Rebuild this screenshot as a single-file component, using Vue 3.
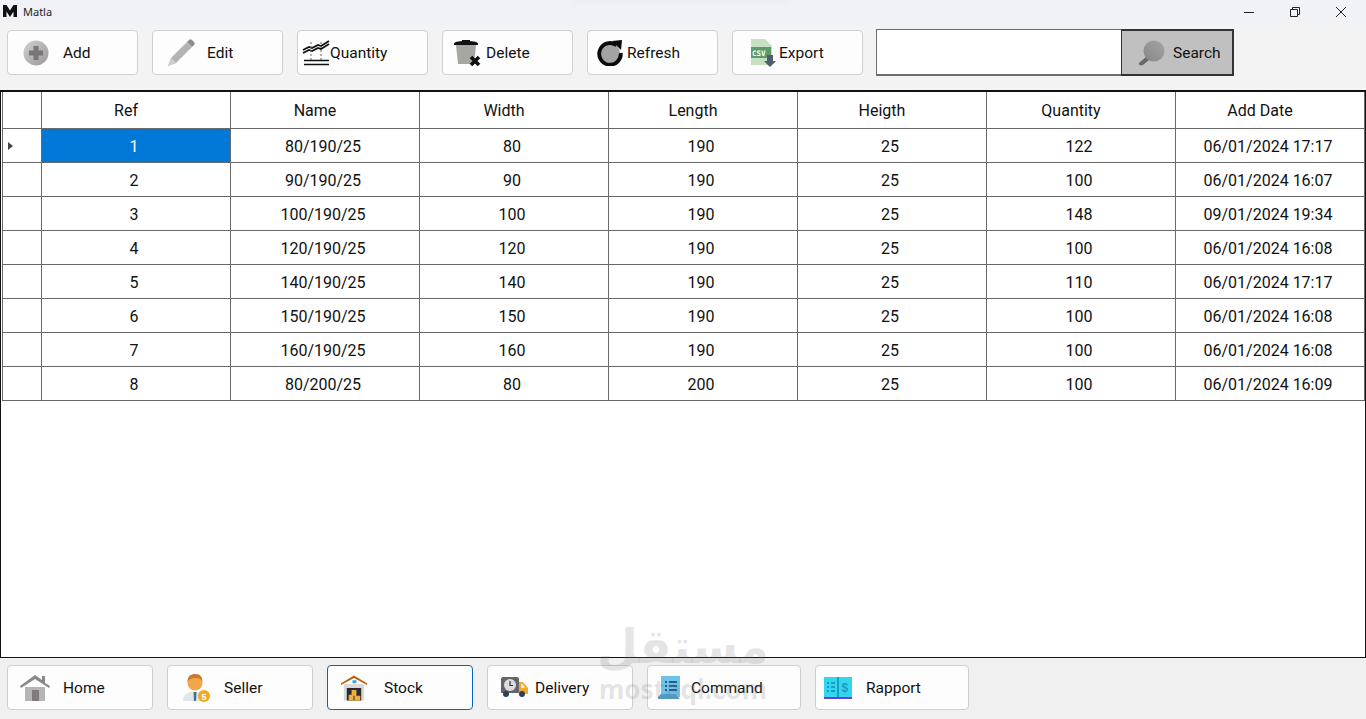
<script setup>
const tools = [
  { label: 'Add', icon: 'add', pad: 15, gap: 14 },
  { label: 'Edit', icon: 'edit', pad: 14, gap: 12 },
  { label: 'Quantity', icon: 'qty', pad: 4, gap: 0 },
  { label: 'Delete', icon: 'del', pad: 11, gap: 5 },
  { label: 'Refresh', icon: 'ref', pad: 9, gap: 4 },
  { label: 'Export', icon: 'exp', pad: 17, gap: 3 },
]
const navs = [
  { label: 'Home', icon: 'home', cls: 'w146', pad: 12, gap: 13 },
  { label: 'Seller', icon: 'seller', cls: 'w146', pad: 15, gap: 14 },
  { label: 'Stock', icon: 'stock', cls: 'w146 active', pad: 13, gap: 17 },
  { label: 'Delivery', icon: 'truck', cls: 'w146', pad: 13, gap: 7 },
  { label: 'Command', icon: 'cmd', cls: 'w154', pad: 10, gap: 11 },
  { label: 'Rapport', icon: 'book', cls: 'w154', pad: 8, gap: 14 },
]
const cols = ['Ref', 'Name', 'Width', 'Length', 'Heigth', 'Quantity', 'Add Date']
const rows = [
  ['1', '80/190/25', '80', '190', '25', '122', '06/01/2024 17:17'],
  ['2', '90/190/25', '90', '190', '25', '100', '06/01/2024 16:07'],
  ['3', '100/190/25', '100', '190', '25', '148', '09/01/2024 19:34'],
  ['4', '120/190/25', '120', '190', '25', '100', '06/01/2024 16:08'],
  ['5', '140/190/25', '140', '190', '25', '110', '06/01/2024 17:17'],
  ['6', '150/190/25', '150', '190', '25', '100', '06/01/2024 16:08'],
  ['7', '160/190/25', '160', '190', '25', '100', '06/01/2024 16:08'],
  ['8', '80/200/25', '80', '200', '25', '100', '06/01/2024 16:09'],
]
</script>

<template>
  <div class="app">
    <header class="titlebar">
      <svg class="logo" width="16" height="14" viewBox="0 0 16 14"><path d="M1 13V1h3.500L8 6.500 11.500 1H15v12h-3.500V7.500L8 13 4.500 7.500V13z" fill="#111"/></svg>
      <span class="title">Matla</span>
      <div class="peek"></div>
      <div class="winctl">
        <svg width="12" height="12" viewBox="0 0 12 12"><path d="M1 6.500h10" stroke="#222" fill="none"/></svg>
        <svg width="12" height="12" viewBox="0 0 12 12"><path d="M1.500 3.500h7v7h-7zM3.500 3.500v-2h7v7h-2" stroke="#222" fill="none"/></svg>
        <svg width="12" height="12" viewBox="0 0 12 12"><path d="M1 1l10 10M11 1L1 11" stroke="#222" fill="none"/></svg>
      </div>
    </header>

    <div class="toolbar">
      <button v-for="t in tools" :key="t.label" class="btn tool" :style="{ paddingLeft: t.pad + 'px', gap: t.gap + 'px' }">
        <svg v-if="t.icon === 'add'" width="26" height="26" viewBox="0 0 26 26">
          <circle cx="13" cy="13" r="12.500" fill="url(#gAdd)"/>
          <path d="M10.500 6h5v4.500H20v5h-4.500V20h-5v-4.500H6v-5h4.500z" fill="#7a7676"/>
          <defs><linearGradient id="gAdd" x1="0" y1="0" x2="1" y2="1"><stop offset="0" stop-color="#d2d2d2"/><stop offset="1" stop-color="#989898"/></linearGradient></defs>
        </svg>
        <svg v-else-if="t.icon === 'edit'" width="28" height="28" viewBox="0 0 28 28">
          <path d="M1 27l3-8L20 3l5 5L9 24z" fill="#b4b4b4"/>
          <path d="M20 3l2-2c1-1 2-1 3 0l2 2c1 1 1 2 0 3l-2 2z" fill="#8d8d8d"/>
          <path d="M1 27l3-8 5 5z" fill="#cfcfcf"/>
        </svg>
        <svg v-else-if="t.icon === 'qty'" width="28" height="26" viewBox="0 0 28 26">
          <path d="M1 10l6-3 3 1 6-3 3 1 8-5" stroke="#111" stroke-width="1.800" fill="none"/>
          <path d="M1 13l6-3 3 1 6-3 3 1 8-5" stroke="#111" stroke-width="1.800" fill="none"/>
          <path d="M9 2v18M19 2v18" stroke="#666" stroke-dasharray="2 2" fill="none"/>
          <path d="M2 20.500h25M2 24.500h25" fill="none" stroke="#111" stroke-width="1.500"/>
        </svg>
        <svg v-else-if="t.icon === 'del'" width="27" height="28" viewBox="0 0 27 28">
          <path d="M2 6h20l-2 19H4z" fill="#a6a6a2"/>
          <path d="M0 5c0-2 3-3 12-3s12 1 12 3v1H0z" fill="#111"/>
          <path d="M8 1h8v2H8z" fill="#111"/>
          <path d="M17 18l8 8M25 18l-8 8" stroke="#111" stroke-width="3.600" fill="none"/>
        </svg>
        <svg v-else-if="t.icon === 'ref'" width="26" height="26" viewBox="0 0 26 26">
          <circle cx="13" cy="13" r="10" fill="#a3a3a3"/>
          <path d="M19.500 5.200A10.800 10.800 0 1 0 23.800 13" stroke="#0a0a0a" stroke-width="3.800" fill="none"/>
          <path d="M15 1l10-1-1 10z" fill="#0a0a0a"/>
        </svg>
        <svg v-else-if="t.icon === 'exp'" width="26" height="28" viewBox="0 0 26 28">
          <path d="M1 0h14l7 7v19H1z" fill="#c5e0c3"/>
          <path d="M1 8h20v11H1z" fill="#5d9b6b"/>
          <text x="2" y="16.500" font-family="DejaVu Sans Mono" font-size="7.500" font-weight="700" fill="#fff">CSV</text>
          <path d="M17 16h6v6h3l-6 6-6-6h3z" fill="#4b5f6d"/>
        </svg>
        <span>{{ t.label }}</span>
      </button>

      <div class="search">
        <div class="search-input"></div>
        <button class="search-btn">
          <svg width="28" height="26" viewBox="0 0 28 26">
            <path d="M2 23l7-6 3 3-6 5c-2 1-5 0-4-2z" fill="#6d6568"/>
            <circle cx="17" cy="11" r="10.500" fill="url(#gS)"/>
            <defs><linearGradient id="gS" x1="0" y1="1" x2="1" y2="0"><stop offset="0" stop-color="#868686"/><stop offset="1" stop-color="#a5a5a5"/></linearGradient></defs>
          </svg>
          <span>Search</span>
        </button>
      </div>
    </div>

    <main class="grid-wrap">
      <div class="row head">
        <div class="cell rh"></div>
        <div v-for="c in cols" :key="c" class="cell hc">{{ c }}</div>
      </div>
      <div v-for="(r, i) in rows" :key="i" class="row">
        <div class="cell rh">
          <span v-if="i === 0" class="arrow"></span>
        </div>
        <div v-for="(v, j) in r" :key="j" class="cell dc" :class="{ sel: i === 0 && j === 0 }">{{ v }}</div>
      </div>
    </main>

    <footer class="bottombar">
      <button v-for="n in navs" :key="n.label" class="btn" :class="n.cls" :style="{ paddingLeft: n.pad + 'px', gap: n.gap + 'px' }">
        <svg v-if="n.icon === 'home'" width="30" height="26" viewBox="0 0 30 26">
          <path d="M5 12h20v14H5z" fill="#b5b5b5"/>
          <path d="M12 15h7v11h-7z" fill="#7f7b7b"/>
          <path d="M0 11L15 0l7 5V1h3v7l5 3-1 2L15 4 1 13z" fill="#8a8888"/>
        </svg>
        <svg v-else-if="n.icon === 'seller'" width="27" height="28" viewBox="0 0 27 28">
          <path d="M0 27c0-7 5-9 10-9h6c3 0 6 2 6 9z" fill="#dfe7e8"/>
          <path d="M10.500 18h3l-.5 9h-2z" fill="#3d6f9e"/>
          <circle cx="12" cy="9" r="7.500" fill="#f0a64a"/>
          <path d="M4.500 8c0-6 3-8 8-8s7 3 7 8c-1-3-3-4-7-4S6 5 4.500 8z" fill="#c9792f"/>
          <circle cx="21" cy="22" r="6" fill="#f1a91e"/>
          <text x="18.500" y="25.500" font-family="Liberation Sans" font-size="9" font-weight="700" fill="#fff">5</text>
        </svg>
        <svg v-else-if="n.icon === 'stock'" width="26" height="26" viewBox="0 0 27 26">
          <path d="M3 9h21v17H3z" fill="#d9d9d9"/>
          <path d="M6 13h15v13H6z" fill="#2c2c30"/>
          <path d="M8 20h5v6H8zM11 15h5v6h-5zM14 21h6v5h-6z" fill="#efb03d"/>
          <path d="M0 8L13.500 0 27 8v2L13.500 2.500 0 10z" fill="#b8640f"/>
          <path d="M12 5h4v3h-4z" fill="#2ba3dd"/>
        </svg>
        <svg v-else-if="n.icon === 'truck'" width="27" height="21" viewBox="0 0 27 21">
          <path d="M2 0h14c1 0 2 1 2 2v14H0V2c0-1 1-2 2-2z" fill="#65636b"/>
          <circle cx="9" cy="8" r="6" fill="#dcdcdc"/>
          <path d="M9 4v4.500h3" stroke="#333" stroke-width="1.200" fill="none"/>
          <path d="M18 5h4l5 6v6h-9z" fill="#f0a82c"/>
          <path d="M20 7h2l2 4h-4z" fill="#cfeaf4"/>
          <circle cx="5" cy="17" r="3" fill="#2e3f55"/>
          <circle cx="21" cy="17" r="3" fill="#2e3f55"/>
        </svg>
        <svg v-else-if="n.icon === 'cmd'" width="22" height="23" viewBox="0 0 22 23">
          <path d="M3 0h19v21H3z" fill="#6cc2e8"/>
          <path d="M7 5h2v2H7zM7 9h2v2H7zM7 13h2v2H7zM11 5h8v2h-8zM11 9h8v2h-8zM11 13h8v2h-8z" fill="#1e5f92"/>
          <path d="M0 21l3-3h14l3 3 2 2H0z" fill="#4f9dc8"/>
        </svg>
        <svg v-else-if="n.icon === 'book'" width="28" height="22" viewBox="0 0 28 22">
          <path d="M0 0h28v20H0z" fill="#32d7ef"/>
          <path d="M13 0h2v20h-2z" fill="#1c9cc4"/>
          <path d="M0 20h28v2H0z" fill="#6a3fe0"/>
          <path d="M3 5h2v2H3zM7 5h4v2H7zM3 9h2v2H3zM7 9h4v2H7zM3 13h2v2H3zM7 13h4v2H7z" fill="#1c9cc4"/>
          <text x="17.500" y="15" font-family="Liberation Sans" font-size="12" font-weight="700" fill="#1c9cc4">$</text>
        </svg>
        <span>{{ n.label }}</span>
      </button>
    </footer>

    <div class="watermark" aria-hidden="true">
      <div class="wm-ar">مستقل</div>
      <div class="wm-en">mostaql.com</div>
    </div>
  </div>
</template>

<style scoped>
.app {
  position: relative;
  width: 1366px;
  height: 719px;
  display: flex;
  flex-direction: column;
  background: #f3f3f3;
  overflow: hidden;
  font-family: Roboto, "Noto Sans", sans-serif;
  font-size: 16px;
  color: #111;
}
.titlebar {
  height: 23px;
  background: #f0f2f7;
  display: flex;
  align-items: center;
  padding-left: 2px;
  flex: none;
  position: relative;
}
.title {
  font-family: "Noto Sans", sans-serif;
  font-size: 11px;
  margin-left: 5px;
  color: #222;
}
.logo { margin-top: -1px; }
.peek {
  position: absolute;
  left: 575px;
  top: -6px;
  width: 215px;
  height: 8px;
  background: #e9ebef;
  filter: blur(3px);
}
.winctl {
  margin-left: auto;
  display: flex;
  gap: 34px;
  padding-right: 19px;
}
.toolbar {
  height: 67px;
  flex: none;
  display: flex;
  align-items: flex-start;
  padding: 7px 0 0 7px;
  gap: 14px;
  box-sizing: border-box;
}
.btn {
  font: inherit;
  font-size: 15.500px;
  color: inherit;
  display: flex;
  align-items: center;
  height: 45px;
  box-sizing: border-box;
  background: #fdfdfd;
  border: 1px solid #cfcfcf;
  border-radius: 4px;
  flex: none;
}
.tool { width: 131px; }
.search {
  display: flex;
  margin-left: -1px;
  margin-top: -1px;
  height: 47px;
}
.search-input {
  width: 245px;
  box-sizing: border-box;
  background: #fff;
  border: 1px solid #6d6d6d;
  border-right: none;
  border-bottom-width: 2px;
}
.search-btn {
  font: inherit;
  font-size: 15.500px;
  color: inherit;
  width: 113px;
  box-sizing: border-box;
  background: #c0c0c0;
  border: 2px solid #333;
  border-left-width: 1px;
  display: flex;
  align-items: center;
  padding: 0 0 0 15px;
  gap: 8px;
}
.grid-wrap {
  flex: 1;
  min-height: 0;
  background: #fff;
  border: 1px solid #111;
  border-top-width: 2px;
  padding-left: 1px;
  box-sizing: border-box;
  display: flex;
  flex-direction: column;
}
.row {
  display: grid;
  grid-template-columns: 40px repeat(7, 189px);
  height: 34px;
  flex: none;
  box-sizing: border-box;
}
.row.head { height: 37px; }
.cell {
  display: flex;
  align-items: center;
  justify-content: center;
  box-sizing: border-box;
  border-right: 1px solid #696969;
  border-bottom: 1px solid #696969;
}
.head .cell:first-child, .rh { border-left: 1px solid #696969; }
.hc { padding-right: 20px; padding-top: 1px; }
.dc { padding-right: 4px; padding-top: 1px; }
.sel { background: #0078d7; color: #fff; }
.arrow {
  width: 0;
  height: 0;
  border-left: 5px solid #444;
  border-top: 4.500px solid transparent;
  border-bottom: 4.500px solid transparent;
  margin-right: 24px;
}
.bottombar {
  height: 61px;
  flex: none;
  background: #f0f0f0;
  display: flex;
  align-items: flex-start;
  padding: 7px 0 0 7px;
  gap: 14px;
  box-sizing: border-box;
}
.w146 { width: 146px; }
.w154 { width: 154px; }
.active { border-color: #0067c0; }
.watermark {
  position: absolute;
  left: 593px;
  top: 612px;
  width: 180px;
  text-align: center;
  color: rgba(120, 120, 120, 0.2);
  pointer-events: none;
  font-family: "Noto Sans", sans-serif;
  font-weight: 700;
}
.wm-ar {
  font-family: "Noto Sans CJK SC", "DejaVu Sans", sans-serif;
  font-size: 47px;
  line-height: 62px;
}
.wm-en {
  font-size: 26px;
  line-height: 30px;
}
</style>
